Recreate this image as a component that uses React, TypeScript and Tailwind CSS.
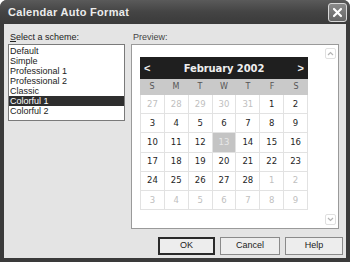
import React from "react";

const schemes = ["Default", "Simple", "Professional 1", "Professional 2", "Classic", "Colorful 1", "Colorful 2"];
const dayNames = ["S", "M", "T", "W", "T", "F", "S"];

// Feb 2002 grid: starts with Jan 27
const cells: { d: number; cur: boolean }[] = [];
[27, 28, 29, 30, 31].forEach((d) => cells.push({ d, cur: false }));
for (let d = 1; d <= 28; d++) cells.push({ d, cur: true });
for (let d = 1; d <= 9; d++) cells.push({ d, cur: false });

export default function App() {
  return (
    <div className="w-[350px] h-[262px] bg-white font-['Liberation_Sans',Arial,sans-serif]">
      <div className="h-full flex flex-col rounded-t-[7px] overflow-hidden bg-[#3a3a3a]">
        {/* Title bar */}
        <div className="h-[24px] flex items-center justify-between pl-[8px] pr-[3px] bg-gradient-to-b from-[#5a5a5a] via-[#444] to-[#3a3a3a]">
          <span className="text-[11px] font-bold text-[#ececec] tracking-[0.3px]">
            Calendar Auto Format
          </span>
          <div className="w-[19px] h-[19px] rounded-[3px] border border-[#d8d8d8] bg-gradient-to-b from-[#8a8a8a] to-[#666] flex items-center justify-center">
            <svg width="11" height="11" viewBox="0 0 11 11">
              <path d="M2 2 L9 9 M9 2 L2 9" stroke="#fff" strokeWidth="2.2" strokeLinecap="round" />
            </svg>
          </div>
        </div>

        {/* Body */}
        <div className="flex-1 mx-[4px] mb-[4px] bg-[#e4e4e4] flex flex-col">
          <div className="flex pt-[8px]">
            {/* Scheme list */}
            <div className="ml-[4px] w-[117px] flex flex-col">
              <span className="text-[9px] leading-[11px] text-[#222] pl-[2px]">
                <span className="underline">S</span>elect a scheme:
              </span>
              <div className="mt-[1px] h-[77px] bg-white border border-[#7a7a7a] pt-[1px]">
                {schemes.map((s) => (
                  <div
                    key={s}
                    className={`h-[10px] leading-[10px] text-[9px] pl-[1px] ${
                      s === "Colorful 1" ? "bg-[#2e2e2e] text-white" : "text-[#222]"
                    }`}
                  >
                    {s}
                  </div>
                ))}
              </div>
            </div>

            {/* Preview */}
            <div className="ml-[6px] flex flex-col">
              <span className="text-[9px] leading-[11px] text-[#444] pl-[2px]">Preview:</span>
              <div className="mt-[1px] w-[208px] h-[185px] bg-white border border-[#9a9a9a] flex">
                <div className="flex-1 pl-[8px] pt-[12px]">
                  <div className="w-[168px]">
                    <div className="h-[22px] bg-[#1f1f1f] flex items-center justify-between px-[4px] text-[#eee]">
                      <span className="text-[11px] font-bold">&lt;</span>
                      <span className="text-[10px] font-bold font-['DejaVu_Sans',sans-serif] tracking-[-0.1px]">February 2002</span>
                      <span className="text-[11px] font-bold">&gt;</span>
                    </div>
                    <div className="h-[16px] bg-[#c9c9c9] grid grid-cols-7">
                      {dayNames.map((n, i) => (
                        <span key={i} className="flex items-center justify-center text-[8px] text-[#555] font-['DejaVu_Sans',sans-serif]">
                          {n}
                        </span>
                      ))}
                    </div>
                    <div className="grid grid-cols-7 border-l border-[#e2e2e2]">
                      {cells.map((c, i) => {
                        const sel = c.cur && c.d === 13;
                        return (
                          <span
                            key={i}
                            className={`h-[19.2px] flex items-center justify-center border-r border-b border-[#e2e2e2] text-[8.5px] font-['DejaVu_Sans',sans-serif] ${
                              sel ? "bg-[#c4c4c4] text-[#e8e8e8]" : c.cur ? "text-[#1e1e1e]" : "text-[#c0c0c0]"
                            }`}
                          >
                            {c.d}
                          </span>
                        );
                      })}
                    </div>
                  </div>
                </div>
                {/* Scrollbar */}
                <div className="w-[13px] flex flex-col justify-between py-[3px] pr-[2px]">
                  <div className="h-[11px] border border-[#e0e0e0] rounded-[2px] flex items-center justify-center">
                    <svg width="7" height="5" viewBox="0 0 7 5">
                      <path d="M1 4 L3.5 1.5 L6 4" stroke="#b4b4b4" strokeWidth="1.2" fill="none" />
                    </svg>
                  </div>
                  <div className="h-[11px] border border-[#e0e0e0] rounded-[2px] flex items-center justify-center">
                    <svg width="7" height="5" viewBox="0 0 7 5">
                      <path d="M1 1 L3.5 3.5 L6 1" stroke="#b4b4b4" strokeWidth="1.2" fill="none" />
                    </svg>
                  </div>
                </div>
              </div>
            </div>
          </div>

          {/* Buttons */}
          <div className="flex justify-end gap-[5px] pr-[3px] mt-[8px]">
            <button className="w-[57px] h-[18px] bg-[#ededed] border-2 border-[#2a2a2a] text-[9px] text-[#222]">OK</button>
            <button className="w-[60px] h-[18px] bg-[#ededed] border border-[#8a8a8a] text-[9px] text-[#222]">Cancel</button>
            <button className="w-[58px] h-[18px] bg-[#ededed] border border-[#8a8a8a] text-[9px] text-[#222]">Help</button>
          </div>
        </div>
      </div>
    </div>
  );
}
